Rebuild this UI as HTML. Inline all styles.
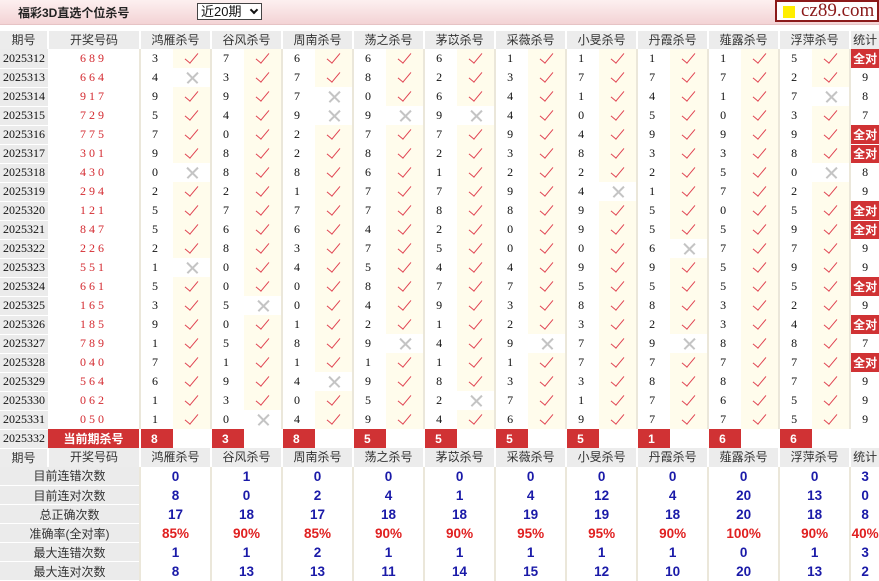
<!DOCTYPE html>
<html><head><meta charset="utf-8">
<style>
*{margin:0;padding:0;box-sizing:border-box}
body{width:879px;height:580px;overflow:hidden;background:#fff;position:relative;font-family:"Liberation Serif","Noto Serif CJK SC",serif}
.top{position:absolute;left:0;top:0;width:879px;height:25px;background:linear-gradient(#fdf0f0,#f3d3d5);border-bottom:1px solid #e6c3c5}
.title{position:absolute;left:18px;top:4px;font:bold 12px "Liberation Sans","Noto Sans CJK SC",sans-serif;color:#222}
.sel{position:absolute;left:197px;top:3px;width:65px;height:17px;border:1px solid #444;background:#fff;font:13px "Liberation Sans","Noto Sans CJK SC",sans-serif;line-height:15px;padding-left:3px;color:#111}
.sel i{position:absolute;right:4px;top:3px;width:6px;height:6px;border:solid #111;border-width:0 2px 2px 0;transform:rotate(45deg)}
.logo{position:absolute;left:775px;top:0;width:104px;height:22px;border:2px solid #8b1a1a;background:#fff;font:19px "Liberation Serif",serif;color:#8b1a1a;line-height:18px;padding-left:24px}
.logo b{position:absolute;left:6px;top:4px;width:12px;height:12px;background:#ffee00}
table{position:absolute;top:31px;left:0;width:879px;border-collapse:collapse;table-layout:fixed}
tr{height:19px}
tr.h{height:18px}
td,th{padding:0;height:19px;font-size:12px;font-weight:normal;white-space:nowrap;overflow:hidden}
th{background:#ececec;color:#333;font-family:"Liberation Sans","Noto Sans CJK SC",sans-serif;border-left:2px solid #fff;text-align:center;height:18px;line-height:18px}
.p{background:#ebebeb;text-align:center;border-bottom:1px solid #fff;color:#111}
.d{color:#d42a30;text-align:center;letter-spacing:3px}
.n{padding-left:11px;border-left:2px solid #ebe7da;color:#111}
.y{background:#fffcec;position:relative}
.y::after{content:"";position:absolute;left:15px;top:1px;width:6px;height:12px;border:solid #e04452;border-width:0 1.7px 1.7px 0;transform:rotate(40deg)}
.w{position:relative}
.w::before,.w::after{content:"";position:absolute;left:12px;top:9px;width:15px;height:1.5px;background:#c4c4c4;transform:rotate(45deg)}
.w::after{transform:rotate(-45deg)}
.s{text-align:center;border-left:2px solid #ebe7da;color:#111}
.a{background:#d03234;color:#fff;font-weight:bold;font-family:"Liberation Sans","Noto Sans CJK SC",sans-serif;text-align:center;border-bottom:1px solid #fff;border-left:2px solid #ebe7da}
.cur{background:#d03234;color:#fff;font-weight:bold;font-family:"Liberation Sans","Noto Sans CJK SC",sans-serif;text-align:center}
.cn{background:#d03234;color:#fff;font-weight:bold;font-family:"Liberation Sans",sans-serif;padding-left:10px;border-left:2px solid #fff}
.lb{background:#ebebeb;text-align:center;color:#333;font-family:"Liberation Sans","Noto Sans CJK SC",sans-serif;border-bottom:1px solid #fff;font-size:12px}
.v{text-align:center;font:bold 13.5px "Liberation Sans",sans-serif;color:#1a1aa8;border-left:2px solid #ebe7da}
.r{color:#e02020}
</style></head><body>
<div class="top"><div class="title">福彩3D直选个位杀号</div></div>
<div class="sel">近20期<i></i></div>
<div class="logo"><b></b>cz89.com</div>
<table>
<colgroup><col style="width:48px"><col style="width:92px">
<col style="width:33px"><col style="width:38px"><col style="width:33px"><col style="width:38px"><col style="width:33px"><col style="width:38px"><col style="width:33px"><col style="width:38px"><col style="width:33px"><col style="width:38px"><col style="width:33px"><col style="width:38px"><col style="width:33px"><col style="width:38px"><col style="width:33px"><col style="width:38px"><col style="width:33px"><col style="width:38px"><col style="width:33px"><col style="width:38px">
<col style="width:29px"></colgroup>
<tr class="h"><th style="border-left:0">期号</th><th>开奖号码</th><th colspan="2">鸿雁杀号</th><th colspan="2">谷风杀号</th><th colspan="2">周南杀号</th><th colspan="2">荡之杀号</th><th colspan="2">茅苡杀号</th><th colspan="2">采薇杀号</th><th colspan="2">小旻杀号</th><th colspan="2">丹霞杀号</th><th colspan="2">薤露杀号</th><th colspan="2">浮萍杀号</th><th>统计</th></tr>
<tr><td class="p">2025312</td><td class="d">689</td><td class="n">3</td><td class="y"></td><td class="n">7</td><td class="y"></td><td class="n">6</td><td class="y"></td><td class="n">6</td><td class="y"></td><td class="n">6</td><td class="y"></td><td class="n">1</td><td class="y"></td><td class="n">1</td><td class="y"></td><td class="n">1</td><td class="y"></td><td class="n">1</td><td class="y"></td><td class="n">5</td><td class="y"></td><td class="a">全对</td></tr>
<tr><td class="p">2025313</td><td class="d">664</td><td class="n">4</td><td class="w"></td><td class="n">3</td><td class="y"></td><td class="n">7</td><td class="y"></td><td class="n">8</td><td class="y"></td><td class="n">2</td><td class="y"></td><td class="n">3</td><td class="y"></td><td class="n">7</td><td class="y"></td><td class="n">7</td><td class="y"></td><td class="n">7</td><td class="y"></td><td class="n">2</td><td class="y"></td><td class="s">9</td></tr>
<tr><td class="p">2025314</td><td class="d">917</td><td class="n">9</td><td class="y"></td><td class="n">9</td><td class="y"></td><td class="n">7</td><td class="w"></td><td class="n">0</td><td class="y"></td><td class="n">6</td><td class="y"></td><td class="n">4</td><td class="y"></td><td class="n">1</td><td class="y"></td><td class="n">4</td><td class="y"></td><td class="n">1</td><td class="y"></td><td class="n">7</td><td class="w"></td><td class="s">8</td></tr>
<tr><td class="p">2025315</td><td class="d">729</td><td class="n">5</td><td class="y"></td><td class="n">4</td><td class="y"></td><td class="n">9</td><td class="w"></td><td class="n">9</td><td class="w"></td><td class="n">9</td><td class="w"></td><td class="n">4</td><td class="y"></td><td class="n">0</td><td class="y"></td><td class="n">5</td><td class="y"></td><td class="n">0</td><td class="y"></td><td class="n">3</td><td class="y"></td><td class="s">7</td></tr>
<tr><td class="p">2025316</td><td class="d">775</td><td class="n">7</td><td class="y"></td><td class="n">0</td><td class="y"></td><td class="n">2</td><td class="y"></td><td class="n">7</td><td class="y"></td><td class="n">7</td><td class="y"></td><td class="n">9</td><td class="y"></td><td class="n">4</td><td class="y"></td><td class="n">9</td><td class="y"></td><td class="n">9</td><td class="y"></td><td class="n">9</td><td class="y"></td><td class="a">全对</td></tr>
<tr><td class="p">2025317</td><td class="d">301</td><td class="n">9</td><td class="y"></td><td class="n">8</td><td class="y"></td><td class="n">2</td><td class="y"></td><td class="n">8</td><td class="y"></td><td class="n">2</td><td class="y"></td><td class="n">3</td><td class="y"></td><td class="n">8</td><td class="y"></td><td class="n">3</td><td class="y"></td><td class="n">3</td><td class="y"></td><td class="n">8</td><td class="y"></td><td class="a">全对</td></tr>
<tr><td class="p">2025318</td><td class="d">430</td><td class="n">0</td><td class="w"></td><td class="n">8</td><td class="y"></td><td class="n">8</td><td class="y"></td><td class="n">6</td><td class="y"></td><td class="n">1</td><td class="y"></td><td class="n">2</td><td class="y"></td><td class="n">2</td><td class="y"></td><td class="n">2</td><td class="y"></td><td class="n">5</td><td class="y"></td><td class="n">0</td><td class="w"></td><td class="s">8</td></tr>
<tr><td class="p">2025319</td><td class="d">294</td><td class="n">2</td><td class="y"></td><td class="n">2</td><td class="y"></td><td class="n">1</td><td class="y"></td><td class="n">7</td><td class="y"></td><td class="n">7</td><td class="y"></td><td class="n">9</td><td class="y"></td><td class="n">4</td><td class="w"></td><td class="n">1</td><td class="y"></td><td class="n">7</td><td class="y"></td><td class="n">2</td><td class="y"></td><td class="s">9</td></tr>
<tr><td class="p">2025320</td><td class="d">121</td><td class="n">5</td><td class="y"></td><td class="n">7</td><td class="y"></td><td class="n">7</td><td class="y"></td><td class="n">7</td><td class="y"></td><td class="n">8</td><td class="y"></td><td class="n">8</td><td class="y"></td><td class="n">9</td><td class="y"></td><td class="n">5</td><td class="y"></td><td class="n">0</td><td class="y"></td><td class="n">5</td><td class="y"></td><td class="a">全对</td></tr>
<tr><td class="p">2025321</td><td class="d">847</td><td class="n">5</td><td class="y"></td><td class="n">6</td><td class="y"></td><td class="n">6</td><td class="y"></td><td class="n">4</td><td class="y"></td><td class="n">2</td><td class="y"></td><td class="n">0</td><td class="y"></td><td class="n">9</td><td class="y"></td><td class="n">5</td><td class="y"></td><td class="n">5</td><td class="y"></td><td class="n">9</td><td class="y"></td><td class="a">全对</td></tr>
<tr><td class="p">2025322</td><td class="d">226</td><td class="n">2</td><td class="y"></td><td class="n">8</td><td class="y"></td><td class="n">3</td><td class="y"></td><td class="n">7</td><td class="y"></td><td class="n">5</td><td class="y"></td><td class="n">0</td><td class="y"></td><td class="n">0</td><td class="y"></td><td class="n">6</td><td class="w"></td><td class="n">7</td><td class="y"></td><td class="n">7</td><td class="y"></td><td class="s">9</td></tr>
<tr><td class="p">2025323</td><td class="d">551</td><td class="n">1</td><td class="w"></td><td class="n">0</td><td class="y"></td><td class="n">4</td><td class="y"></td><td class="n">5</td><td class="y"></td><td class="n">4</td><td class="y"></td><td class="n">4</td><td class="y"></td><td class="n">9</td><td class="y"></td><td class="n">9</td><td class="y"></td><td class="n">5</td><td class="y"></td><td class="n">9</td><td class="y"></td><td class="s">9</td></tr>
<tr><td class="p">2025324</td><td class="d">661</td><td class="n">5</td><td class="y"></td><td class="n">0</td><td class="y"></td><td class="n">0</td><td class="y"></td><td class="n">8</td><td class="y"></td><td class="n">7</td><td class="y"></td><td class="n">7</td><td class="y"></td><td class="n">5</td><td class="y"></td><td class="n">5</td><td class="y"></td><td class="n">5</td><td class="y"></td><td class="n">5</td><td class="y"></td><td class="a">全对</td></tr>
<tr><td class="p">2025325</td><td class="d">165</td><td class="n">3</td><td class="y"></td><td class="n">5</td><td class="w"></td><td class="n">0</td><td class="y"></td><td class="n">4</td><td class="y"></td><td class="n">9</td><td class="y"></td><td class="n">3</td><td class="y"></td><td class="n">8</td><td class="y"></td><td class="n">8</td><td class="y"></td><td class="n">3</td><td class="y"></td><td class="n">2</td><td class="y"></td><td class="s">9</td></tr>
<tr><td class="p">2025326</td><td class="d">185</td><td class="n">9</td><td class="y"></td><td class="n">0</td><td class="y"></td><td class="n">1</td><td class="y"></td><td class="n">2</td><td class="y"></td><td class="n">1</td><td class="y"></td><td class="n">2</td><td class="y"></td><td class="n">3</td><td class="y"></td><td class="n">2</td><td class="y"></td><td class="n">3</td><td class="y"></td><td class="n">4</td><td class="y"></td><td class="a">全对</td></tr>
<tr><td class="p">2025327</td><td class="d">789</td><td class="n">1</td><td class="y"></td><td class="n">5</td><td class="y"></td><td class="n">8</td><td class="y"></td><td class="n">9</td><td class="w"></td><td class="n">4</td><td class="y"></td><td class="n">9</td><td class="w"></td><td class="n">7</td><td class="y"></td><td class="n">9</td><td class="w"></td><td class="n">8</td><td class="y"></td><td class="n">8</td><td class="y"></td><td class="s">7</td></tr>
<tr><td class="p">2025328</td><td class="d">040</td><td class="n">7</td><td class="y"></td><td class="n">1</td><td class="y"></td><td class="n">1</td><td class="y"></td><td class="n">1</td><td class="y"></td><td class="n">1</td><td class="y"></td><td class="n">1</td><td class="y"></td><td class="n">7</td><td class="y"></td><td class="n">7</td><td class="y"></td><td class="n">7</td><td class="y"></td><td class="n">7</td><td class="y"></td><td class="a">全对</td></tr>
<tr><td class="p">2025329</td><td class="d">564</td><td class="n">6</td><td class="y"></td><td class="n">9</td><td class="y"></td><td class="n">4</td><td class="w"></td><td class="n">9</td><td class="y"></td><td class="n">8</td><td class="y"></td><td class="n">3</td><td class="y"></td><td class="n">3</td><td class="y"></td><td class="n">8</td><td class="y"></td><td class="n">8</td><td class="y"></td><td class="n">7</td><td class="y"></td><td class="s">9</td></tr>
<tr><td class="p">2025330</td><td class="d">062</td><td class="n">1</td><td class="y"></td><td class="n">3</td><td class="y"></td><td class="n">0</td><td class="y"></td><td class="n">5</td><td class="y"></td><td class="n">2</td><td class="w"></td><td class="n">7</td><td class="y"></td><td class="n">1</td><td class="y"></td><td class="n">7</td><td class="y"></td><td class="n">6</td><td class="y"></td><td class="n">5</td><td class="y"></td><td class="s">9</td></tr>
<tr><td class="p">2025331</td><td class="d">050</td><td class="n">1</td><td class="y"></td><td class="n">0</td><td class="w"></td><td class="n">4</td><td class="y"></td><td class="n">9</td><td class="y"></td><td class="n">4</td><td class="y"></td><td class="n">6</td><td class="y"></td><td class="n">9</td><td class="y"></td><td class="n">7</td><td class="y"></td><td class="n">7</td><td class="y"></td><td class="n">5</td><td class="y"></td><td class="s">9</td></tr>
<tr><td class="p">2025332</td><td class="cur">当前期杀号</td><td class="cn">8</td><td></td><td class="cn">3</td><td></td><td class="cn">8</td><td></td><td class="cn">5</td><td></td><td class="cn">5</td><td></td><td class="cn">5</td><td></td><td class="cn">5</td><td></td><td class="cn">1</td><td></td><td class="cn">6</td><td></td><td class="cn">6</td><td></td><td></td></tr>
<tr class="h"><th style="border-left:0">期号</th><th>开奖号码</th><th colspan="2">鸿雁杀号</th><th colspan="2">谷风杀号</th><th colspan="2">周南杀号</th><th colspan="2">荡之杀号</th><th colspan="2">茅苡杀号</th><th colspan="2">采薇杀号</th><th colspan="2">小旻杀号</th><th colspan="2">丹霞杀号</th><th colspan="2">薤露杀号</th><th colspan="2">浮萍杀号</th><th>统计</th></tr>
<tr><td class="lb" colspan="2">目前连错次数</td><td class="v" colspan="2">0</td><td class="v" colspan="2">1</td><td class="v" colspan="2">0</td><td class="v" colspan="2">0</td><td class="v" colspan="2">0</td><td class="v" colspan="2">0</td><td class="v" colspan="2">0</td><td class="v" colspan="2">0</td><td class="v" colspan="2">0</td><td class="v" colspan="2">0</td><td class="v">3</td></tr>
<tr><td class="lb" colspan="2">目前连对次数</td><td class="v" colspan="2">8</td><td class="v" colspan="2">0</td><td class="v" colspan="2">2</td><td class="v" colspan="2">4</td><td class="v" colspan="2">1</td><td class="v" colspan="2">4</td><td class="v" colspan="2">12</td><td class="v" colspan="2">4</td><td class="v" colspan="2">20</td><td class="v" colspan="2">13</td><td class="v">0</td></tr>
<tr><td class="lb" colspan="2">总正确次数</td><td class="v" colspan="2">17</td><td class="v" colspan="2">18</td><td class="v" colspan="2">17</td><td class="v" colspan="2">18</td><td class="v" colspan="2">18</td><td class="v" colspan="2">19</td><td class="v" colspan="2">19</td><td class="v" colspan="2">18</td><td class="v" colspan="2">20</td><td class="v" colspan="2">18</td><td class="v">8</td></tr>
<tr><td class="lb" colspan="2">准确率(全对率)</td><td class="v r" colspan="2">85%</td><td class="v r" colspan="2">90%</td><td class="v r" colspan="2">85%</td><td class="v r" colspan="2">90%</td><td class="v r" colspan="2">90%</td><td class="v r" colspan="2">95%</td><td class="v r" colspan="2">95%</td><td class="v r" colspan="2">90%</td><td class="v r" colspan="2">100%</td><td class="v r" colspan="2">90%</td><td class="v r">40%</td></tr>
<tr><td class="lb" colspan="2">最大连错次数</td><td class="v" colspan="2">1</td><td class="v" colspan="2">1</td><td class="v" colspan="2">2</td><td class="v" colspan="2">1</td><td class="v" colspan="2">1</td><td class="v" colspan="2">1</td><td class="v" colspan="2">1</td><td class="v" colspan="2">1</td><td class="v" colspan="2">0</td><td class="v" colspan="2">1</td><td class="v">3</td></tr>
<tr><td class="lb" colspan="2">最大连对次数</td><td class="v" colspan="2">8</td><td class="v" colspan="2">13</td><td class="v" colspan="2">13</td><td class="v" colspan="2">11</td><td class="v" colspan="2">14</td><td class="v" colspan="2">15</td><td class="v" colspan="2">12</td><td class="v" colspan="2">10</td><td class="v" colspan="2">20</td><td class="v" colspan="2">13</td><td class="v">2</td></tr>
</table>
</body></html>
